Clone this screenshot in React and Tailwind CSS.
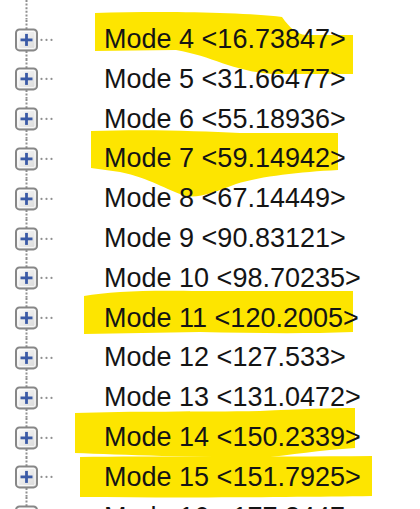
const modes = [
  { n: 4, v: "16.73847" },
  { n: 5, v: "31.66477" },
  { n: 6, v: "55.18936" },
  { n: 7, v: "59.14942" },
  { n: 8, v: "67.14449" },
  { n: 9, v: "90.83121" },
  { n: 10, v: "98.70235" },
  { n: 11, v: "120.2005" },
  { n: 12, v: "127.533" },
  { n: 13, v: "131.0472" },
  { n: 14, v: "150.2339" },
  { n: 15, v: "151.7925" },
  { n: 16, v: "177.3447" },
];

// marker strokes drawn behind the labels
const strokes = [
  "M95,13 C160,11 240,12 282,17 C290,28 296,34 306,35 L353,35 L353,74 L272,74 C232,71 212,56 176,50 L95,51 Z",
  "M91,131 C150,129 200,131 240,133 L338,133 L338,170 C300,172 262,176 236,184 C216,192 200,198 186,196 C166,190 150,178 120,172 L91,168 Z",
  "M84,296 C110,291 150,290 200,291 L353,291 L353,332 C300,334 250,333 200,332 L84,334 Z",
  "M75,413 C130,411 200,412 260,411 C300,409 330,408 355,408 L355,448 C320,450 290,455 262,458 C200,457 120,455 75,453 Z",
  "M80,457 C150,456 260,457 372,456 L372,496 C300,497 200,498 80,497 Z",
];

const ROW = 39.8;
const MID = ROW / 2;

function Expander() {
  return (
    <svg width="60" height={ROW} viewBox={`0 0 60 ${ROW}`} className="shrink-0">
      <line x1="26.5" y1="0" x2="26.5" y2={MID - 11} stroke="#8f8f8f" strokeWidth="2" strokeDasharray="2 1.6" />
      <line x1="26.5" y1={MID + 11} x2="26.5" y2={ROW} stroke="#8f8f8f" strokeWidth="2" strokeDasharray="2 1.6" />
      <rect x="16" y={MID - 10.5} width="21" height="21" rx="3.5" fill="url(#boxfill)" stroke="#878787" strokeWidth="2" />
      <rect x="18" y={MID - 8.5} width="17" height="17" rx="1.5" fill="none" stroke="#ffffff" strokeOpacity="0.85" strokeWidth="1" />
      <line x1="20.5" y1={MID} x2="32.5" y2={MID} stroke="#3a5aa6" strokeWidth="2.8" />
      <line x1="26.5" y1={MID - 6} x2="26.5" y2={MID + 6} stroke="#3a5aa6" strokeWidth="2.8" />
      <circle cx="41.5" cy={MID} r="1.1" fill="#8f8f8f" />
      <circle cx="46.5" cy={MID} r="1.1" fill="#8f8f8f" />
      <circle cx="51.5" cy={MID} r="1.1" fill="#8f8f8f" />
    </svg>
  );
}

export default function App() {
  return (
    <div className="relative w-[420px] h-[509px] overflow-hidden bg-white">
      <svg className="absolute inset-0 z-0" width="420" height="509">
        <defs>
          <linearGradient id="boxfill" x1="0" y1="0" x2="1" y2="1">
            <stop offset="0" stopColor="#ffffff" />
            <stop offset="1" stopColor="#d6d6d6" />
          </linearGradient>
        </defs>
        {strokes.map((d, i) => (
          <path key={i} d={d} fill="#fde500" />
        ))}
      </svg>

      <div className="relative z-10 flex flex-col">
        <svg width="60" height="19.6" className="shrink-0">
          <line x1="26.5" y1="0" x2="26.5" y2="19.6" stroke="#8f8f8f" strokeWidth="2" strokeDasharray="2 1.6" />
        </svg>
        {modes.map((m) => (
          <div key={m.n} className="flex items-center h-[39.8px]">
            <Expander />
            <span className="ml-[44px] whitespace-nowrap text-[27px] leading-none text-[#141414] font-['Liberation_Sans',Arial,sans-serif]">
              Mode {m.n} &lt;{m.v}&gt;
            </span>
          </div>
        ))}
      </div>
    </div>
  );
}
